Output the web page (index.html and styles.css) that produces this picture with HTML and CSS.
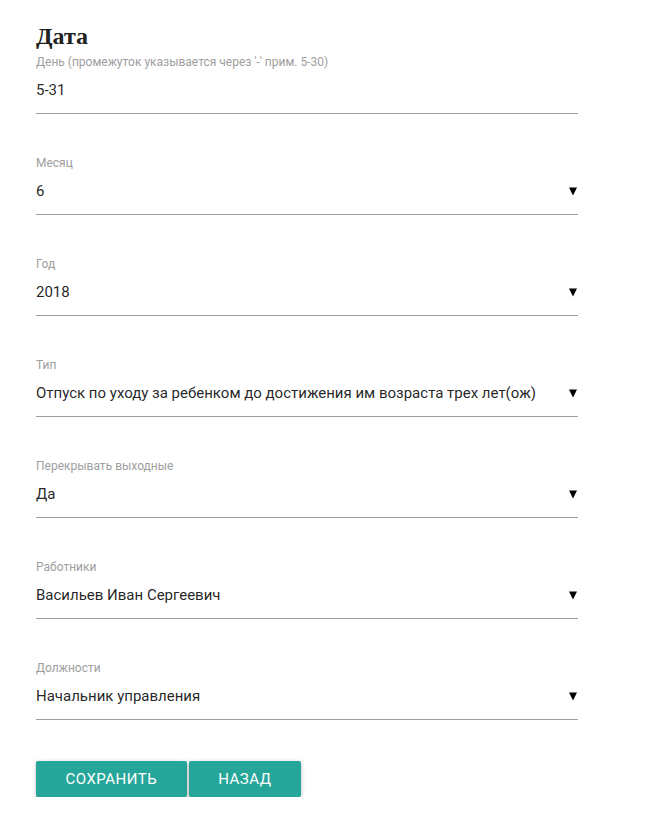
FILE: index.html
```html
<!DOCTYPE html>
<html lang="ru">
<head>
<meta charset="utf-8">
<title>Дата</title>
<link rel="stylesheet" href="styles.css">
</head>
<body>
<div class="page">
  <h1 class="title">Дата</h1>
  <div class="field">
    <div class="label">День (промежуток указывается через '-' прим. 5-30)</div>
    <div class="value">5-31</div>
  </div>
  <div class="field">
    <div class="label">Месяц</div>
    <div class="value select"><span>6</span><svg class="caret" width="8" height="9" viewBox="0 0 8 9"><polygon points="0,0.5 8,0.5 4,8.5" fill="#000"/></svg></div>
  </div>
  <div class="field">
    <div class="label">Год</div>
    <div class="value select"><span>2018</span><svg class="caret" width="8" height="9" viewBox="0 0 8 9"><polygon points="0,0.5 8,0.5 4,8.5" fill="#000"/></svg></div>
  </div>
  <div class="field">
    <div class="label">Тип</div>
    <div class="value select"><span>Отпуск по уходу за ребенком до достижения им возраста трех лет(ож)</span><svg class="caret" width="8" height="9" viewBox="0 0 8 9"><polygon points="0,0.5 8,0.5 4,8.5" fill="#000"/></svg></div>
  </div>
  <div class="field">
    <div class="label">Перекрывать выходные</div>
    <div class="value select"><span>Да</span><svg class="caret" width="8" height="9" viewBox="0 0 8 9"><polygon points="0,0.5 8,0.5 4,8.5" fill="#000"/></svg></div>
  </div>
  <div class="field">
    <div class="label">Работники</div>
    <div class="value select"><span>Васильев Иван Сергеевич</span><svg class="caret" width="8" height="9" viewBox="0 0 8 9"><polygon points="0,0.5 8,0.5 4,8.5" fill="#000"/></svg></div>
  </div>
  <div class="field">
    <div class="label">Должности</div>
    <div class="value select"><span>Начальник управления</span><svg class="caret" width="8" height="9" viewBox="0 0 8 9"><polygon points="0,0.5 8,0.5 4,8.5" fill="#000"/></svg></div>
  </div>
  <div class="actions">
    <button class="btn btn-save">Сохранить</button>
    <button class="btn btn-back">Назад</button>
  </div>
</div>
</body>
</html>
```
FILE: styles.css
```css
html, body {
  margin: 0;
  padding: 0;
  background: #fff;
}
.page {
  width: 542px;
  padding: 21px 0 0 36px;
  font-family: Roboto, "Noto Sans", sans-serif;
  color: #000;
}
.title {
  margin: 0;
  font-family: "Liberation Serif", serif;
  font-weight: bold;
  font-size: 24px;
  line-height: 30px;
  height: 30px;
  color: #222;
}
.field {
  margin-top: 42px;
  border-bottom: 1px solid #9e9e9e;
}
.title + .field {
  margin-top: 4px;
}
.label {
  font-size: 12px;
  line-height: 14px;
  height: 14px;
  color: #9e9e9e;
  white-space: nowrap;
}
.value {
  height: 44px;
  line-height: 42px;
  font-size: 15px;
  color: rgba(0, 0, 0, 0.87);
  white-space: nowrap;
}
.select {
  display: flex;
  align-items: center;
  justify-content: space-between;
  height: 42px;
  padding-bottom: 2px;
}
.caret {
  display: block;
  margin-right: 1px;
  margin-top: 1px;
}
.actions {
  display: flex;
  gap: 2px;
  margin-top: 41px;
}
.btn {
  height: 36px;
  border: none;
  border-radius: 2px;
  background: #26a69a;
  color: #fff;
  font-family: Roboto, sans-serif;
  font-size: 15px;
  letter-spacing: 0.5px;
  text-transform: uppercase;
  padding: 0 29.5px;
  box-shadow: 0 2px 2px 0 rgba(0,0,0,0.14), 0 3px 1px -2px rgba(0,0,0,0.12), 0 1px 5px 0 rgba(0,0,0,0.2);
  cursor: pointer;
}
```
